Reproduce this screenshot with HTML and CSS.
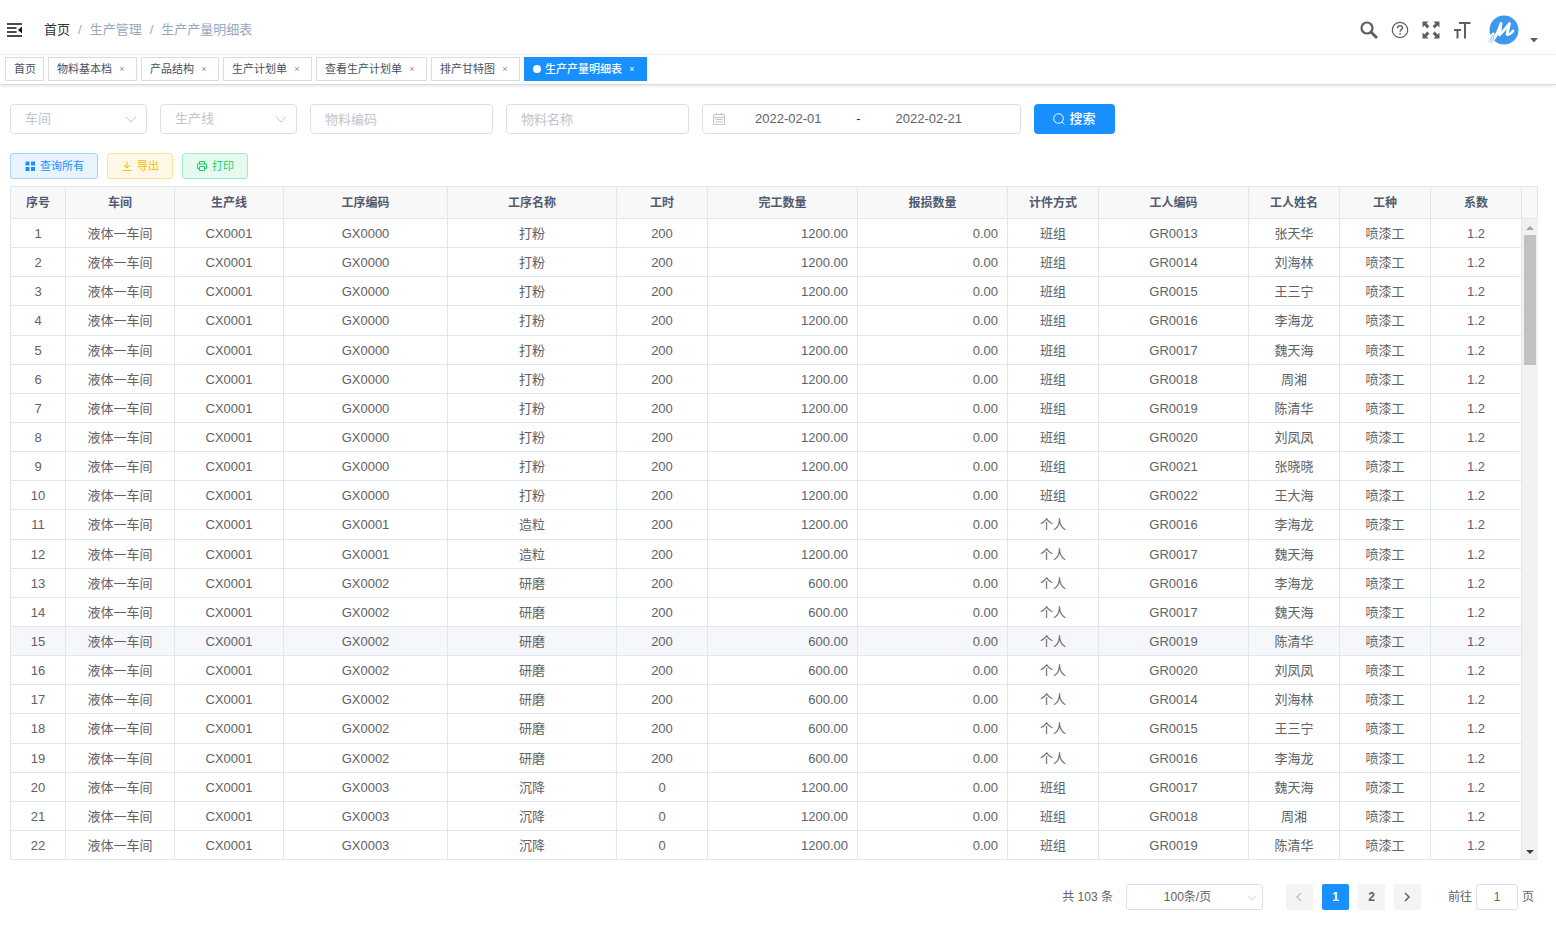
FILE: index.html
```
<!DOCTYPE html>
<html lang="zh-CN">
<head>
<meta charset="utf-8">
<title>生产产量明细表</title>
<link rel="stylesheet" href="styles.css">
</head>
<body>
<header class="navbar">
  <button class="icon-btn" type="button" aria-label="折叠菜单">
    <svg class="fold" viewBox="0 0 16 14"><path d="M0 1h15M0 5h9.500M0 9h9.500M0 13h15" stroke="#111" stroke-width="1.600"/><path d="M15 3.500v7L11 7z" fill="#111"/></svg>
  </button>
  <nav class="breadcrumb" aria-label="面包屑">
    <a href="#">首页</a><span>/</span><span>生产管理</span><span>/</span><span>生产产量明细表</span>
  </nav>
  <div class="tools">
    <button class="icon-btn" type="button" aria-label="搜索"><svg viewBox="0 0 18 18" fill="none" stroke="#5a5e66"><circle cx="7" cy="7" r="5.500" stroke-width="2.200"/><path d="M11 11l6 6" stroke-width="2.800"/></svg></button>
    <button class="icon-btn" type="button" aria-label="帮助"><svg viewBox="0 0 18 18" fill="none" stroke="#5a5e66"><circle cx="9" cy="9" r="7.700" stroke-width="1.200"/><path d="M6.600 7.200c0-3.400 4.900-3.200 4.900-.4 0 1.800-2.400 1.900-2.400 4" stroke-width="1.400"/><path d="M8.300 12.700h1.600" stroke-width="1.500"/></svg></button>
    <button class="icon-btn" type="button" aria-label="全屏"><svg viewBox="0 0 18 18"><g fill="#5a5e66"><path d="M.5.500h6L4.600 2.400l2.800 2.800-2.200 2.200-2.800-2.800L.5 6.500z"/><path d="M17.500.500v6l-1.900-1.900-2.800 2.800-2.200-2.200 2.800-2.800L11.500.500z"/><path d="M.5 17.500v-6l1.900 1.900 2.800-2.800 2.200 2.200-2.800 2.800 1.900 1.900z"/><path d="M17.500 17.500h-6l1.900-1.900-2.800-2.800 2.200-2.200 2.800 2.800 1.900-1.900z"/></g></svg></button>
    <button class="icon-btn" type="button" aria-label="字号"><svg viewBox="0 0 18 18" fill="none" stroke="#5a5e66"><path d="M6 2h11.500M12 2v15.500" stroke-width="2"/><path d="M1 9h7M4.500 9v8.500" stroke-width="2"/></svg></button>
    <button class="user" type="button" aria-label="用户菜单">
      <svg class="avatar" viewBox="0 0 32 32"><circle cx="17" cy="16" r="14.500" fill="#3f97ee"/><path d="M6 26C9 22 12 16 14 9.500L12.500 21C16 17.500 19.500 13.500 22.500 9.500L20 20.500c2 .5 4-1 6-3.500" fill="none" stroke="#fff" stroke-width="2.800" stroke-linejoin="round" stroke-linecap="round"/><path d="M1 24l6-5-4 7 5-3-4 7" fill="none" stroke="#fff" stroke-width="2"/><path d="M2 28l4-7M4 29l3-6" stroke="#8fc3f7" fill="none"/></svg>
      <svg class="caret" viewBox="0 0 8 5"><path d="M0 0h8L4 4.500z" fill="#5a5e66"/></svg>
    </button>
  </div>
</header>

<nav class="tabs" aria-label="已打开页面">
  <a class="tab" href="#">首页</a>
  <a class="tab" href="#">物料基本档<i class="close">×</i></a>
  <a class="tab" href="#">产品结构<i class="close">×</i></a>
  <a class="tab" href="#">生产计划单<i class="close">×</i></a>
  <a class="tab" href="#">查看生产计划单<i class="close">×</i></a>
  <a class="tab" href="#">排产甘特图<i class="close">×</i></a>
  <a class="tab active" href="#">生产产量明细表<i class="close">×</i></a>
</nav>

<main class="content">
  <form class="filters">
    <div class="select short">
      <select aria-label="车间"><option>车间</option></select>
      <svg viewBox="0 0 12 8"><path d="M1 1l5 5 5-5"/></svg>
    </div>
    <div class="select short">
      <select aria-label="生产线"><option>生产线</option></select>
      <svg viewBox="0 0 12 8"><path d="M1 1l5 5 5-5"/></svg>
    </div>
    <input class="field" type="text" placeholder="物料编码" aria-label="物料编码">
    <input class="field" type="text" placeholder="物料名称" aria-label="物料名称">
    <div class="range">
      <svg viewBox="0 0 12 12" fill="none" stroke="#c0c4cc"><path d="M.5 1.500h11v10H.5zM.5 4.500h11M3.500 0v2.500M8.500 0v2.500M2.500 6.500h7M2.500 9h7"/></svg>
      <input type="text" value="2022-02-01" aria-label="开始日期"><span>-</span><input type="text" value="2022-02-21" aria-label="结束日期">
    </div>
    <button class="search" type="button"><svg viewBox="0 0 12 12" fill="none" stroke="#fff"><circle cx="5.500" cy="5.500" r="4.800"/><path d="M9 9l2.500 2.500"/></svg>搜索</button>
  </form>

  <div class="actions">
    <button class="btn blue" type="button"><svg viewBox="0 0 10 10" fill="currentColor"><path d="M.5.500h4v4h-4zM6 .5h4v4H6zM.5 6h4v4h-4zM6 6h4v4H6z"/></svg>查询所有</button>
    <button class="btn amber" type="button"><svg viewBox="0 0 10 10" fill="none" stroke="currentColor"><path d="M5 .5v6.500M2 4l3 3 3-3M.5 9.500h9"/></svg>导出</button>
    <button class="btn green" type="button"><svg viewBox="0 0 10 10" fill="none" stroke="currentColor"><path d="M2.500 3V.5h5V3M2.500 7.500h-2V3h9v4.500h-2M2.500 5.500h5v4h-5z"/></svg>打印</button>
  </div>

  <div class="grid">
    <table>
      <colgroup>
        <col class="c55"><col class="c109"><col class="c109"><col class="c164"><col class="c169"><col class="c91"><col class="c150"><col class="c150"><col class="c91"><col class="c150"><col class="c91"><col class="c91"><col class="c91">
      </colgroup>
      <thead><tr><th>序号</th><th>车间</th><th>生产线</th><th>工序编码</th><th>工序名称</th><th>工时</th><th>完工数量</th><th>报损数量</th><th>计件方式</th><th>工人编码</th><th>工人姓名</th><th>工种</th><th>系数</th></tr></thead>
      <tbody id="rows"></tbody>
    </table>
    <div class="gutter">
      <div class="gutter-head"></div>
      <div class="track">
        <svg viewBox="0 0 8 4"><path d="M0 4h8L4 0z" fill="#a3a3a3"/></svg>
        <div class="thumb"></div>
        <svg viewBox="0 0 8 4"><path d="M0 0h8L4 4z" fill="#404040"/></svg>
      </div>
    </div>
  </div>

  <div class="pagination">
    <span class="total">共 103 条</span>
    <div class="select size">
      <select aria-label="每页条数"><option>100条/页</option></select>
      <svg viewBox="0 0 12 8"><path d="M1 1l5 5 5-5"/></svg>
    </div>
    <div class="pager">
      <button type="button" disabled aria-label="上一页"><svg viewBox="0 0 8 10"><path d="M6 1L2 5l4 4"/></svg></button>
      <button type="button" class="current">1</button>
      <button type="button">2</button>
      <button type="button" aria-label="下一页"><svg viewBox="0 0 8 10"><path d="M2 1l4 4-4 4"/></svg></button>
    </div>
    <label class="jump">前往<input type="text" value="1">页</label>
  </div>
</main>
<script src="app.js"></script>
</body>
</html>
```
FILE: styles.css
```
* { box-sizing: border-box; }

body {
  margin: 0;
  height: 100vh;
  display: flex;
  flex-direction: column;
  background: #fff;
  color: #606266;
  font: 13px/18px "Liberation Sans", "Noto Sans CJK SC", sans-serif;
}

button, input, select { font: inherit; color: inherit; }
button { border: 0; padding: 0; background: none; cursor: pointer; }
a { color: inherit; text-decoration: none; }
svg { display: block; flex: none; }

/* top bar */
.navbar {
  display: flex;
  align-items: center;
  height: 55px;
  padding: 6px 18px 0 7px;
  border-bottom: 1px solid #f0f3f4;
}
.fold { width: 16px; height: 14px; }
.breadcrumb { display: flex; align-items: baseline; gap: 8px; margin-left: 21px; color: #97a8be; }
.breadcrumb a { color: #303133; }
.tools { display: flex; align-items: center; gap: 13px; margin-left: auto; }
.tools .icon-btn svg { width: 18px; height: 18px; }
.user { display: flex; align-items: flex-end; gap: 11px; margin-left: 3px; }
.avatar { width: 32px; height: 32px; }
.caret { width: 8px; height: 5px; margin-bottom: 3px; }

/* page tabs */
.tabs {
  display: flex;
  align-items: center;
  gap: 4px;
  height: 30px;
  padding: 0 5px 1px;
  border-bottom: 1px solid #d8dce5;
  box-shadow: 0 1px 3px rgba(0, 0, 0, .12);
  font-size: 11px;
}
.tab {
  display: flex;
  align-items: center;
  height: 24px;
  padding: 0 7px 0 8px;
  border: 1px solid #d8dce5;
  color: #495060;
}
.close {
  width: 14px;
  margin-left: 3px;
  font-size: 9px;
  font-style: normal;
  text-align: center;
  color: #8a8f99;
}
.tab.active { background: #1890ff; border-color: #1890ff; color: #fff; font-weight: 500; }
.tab.active::before {
  content: "";
  width: 8px;
  height: 8px;
  margin-right: 4px;
  border-radius: 50%;
  background: #fff;
}
.tab.active .close { color: #fff; }

.content {
  flex: 1;
  min-height: 0;
  display: flex;
  flex-direction: column;
  padding: 19px 18px 25px 10px;
}

/* filters */
.filters { display: flex; gap: 13px; }
.select { position: relative; }
.select select {
  appearance: none;
  width: 100%;
  height: 100%;
  padding: 0 26px 0 14px;
  border: 1px solid #dcdfe6;
  border-radius: 4px;
  background: #fff;
}
.select svg {
  position: absolute;
  right: 10px;
  top: 50%;
  width: 12px;
  height: 8px;
  margin-top: -3px;
  fill: none;
  stroke: #c0c4cc;
  pointer-events: none;
}
.short { width: 137px; height: 30px; color: #c0c4cc; }
.field {
  width: 183px;
  height: 30px;
  padding: 0 14px;
  border: 1px solid #dcdfe6;
  border-radius: 4px;
}
.field::placeholder { color: #c0c4cc; }
.range {
  display: flex;
  align-items: center;
  width: 319px;
  height: 30px;
  padding: 0 28px 0 10px;
  border: 1px solid #dcdfe6;
  border-radius: 4px;
}
.range svg { width: 12px; height: 12px; }
.range input { flex: 1; min-width: 0; border: 0; padding: 0; text-align: center; background: none; }
.range span { width: 14px; text-align: center; color: #303133; }
.search {
  display: flex;
  align-items: center;
  justify-content: center;
  gap: 4px;
  width: 81px;
  height: 30px;
  border-radius: 4px;
  background: #1890ff;
  color: #fff;
  font-weight: 500;
}
.search svg { width: 12px; height: 12px; }

/* actions */
.actions { display: flex; gap: 9px; margin: 19px 0 7px; }
.btn {
  display: flex;
  align-items: center;
  gap: 5px;
  height: 26px;
  padding: 0 13px 0 14px;
  border: 1px solid;
  border-radius: 3px;
  font-size: 11px;
}
.btn svg { width: 10px; height: 10px; }
.blue { color: #1890ff; background: #e8f4ff; border-color: #a3d3ff; }
.amber { color: #ffba00; background: #fff8e6; border-color: #ffe399; }
.green { color: #13ce66; background: #e7faf0; border-color: #a1ebc2; }

/* data grid */
.grid {
  flex: 1;
  min-height: 0;
  display: flex;
  border: 1px solid #dfe6ec;
  border-right: 0;
}
.grid table {
  flex: 1;
  height: 100%;
  table-layout: fixed;
  border-collapse: separate;
  border-spacing: 0;
}
.c55 { width: 55px; }
.c91 { width: 91px; }
.c109 { width: 109px; }
.c150 { width: 150px; }
.c164 { width: 164px; }
.c169 { width: 169px; }
th, td {
  padding: 2px 9px 0;
  border-right: 1px solid #dfe6ec;
  border-bottom: 1px solid #dfe6ec;
  text-align: center;
  line-height: 20px;
}
th { height: 32px; padding-top: 0; background: #f8f8f9; color: #515a6e; font-size: 12px; font-weight: 700; }
tbody tr:last-child td { border-bottom: 0; }
td.num { text-align: right; }
tr.hover td { background: #f5f7fa; }
.gutter { width: 16px; display: flex; flex-direction: column; }
.gutter-head { height: 32px; background: #f8f8f9; border-right: 1px solid #dfe6ec; border-bottom: 1px solid #dfe6ec; }
.track { flex: 1; display: flex; flex-direction: column; align-items: center; padding: 7px 0 5px; background: #f1f1f1; }
.track svg { width: 8px; height: 4px; }
.thumb { width: 12px; height: 130px; margin: 5px 0 auto; background: #c1c1c1; }

/* pagination */
.pagination {
  display: flex;
  align-items: center;
  justify-content: flex-end;
  margin-top: 24px;
  padding-right: 4px;
  font-size: 12px;
}
.size { width: 137px; height: 26px; margin: 0 23px 0 13px; }
.size select { border-radius: 3px; text-align-last: center; padding: 0 14px 0 0; }
.size svg { right: 6px; width: 10px; }
.pager { display: flex; gap: 9px; }
.pager button {
  display: flex;
  align-items: center;
  justify-content: center;
  width: 27px;
  height: 26px;
  border-radius: 2px;
  background: #f4f4f5;
  font-weight: 700;
}
.pager svg { width: 8px; height: 10px; fill: none; stroke: #606266; stroke-width: 1.5; }
.pager button:disabled svg { stroke: #c0c4cc; }
.pager .current { background: #1890ff; color: #fff; }
.jump { display: flex; align-items: center; gap: 4px; margin-left: 27px; }
.jump input { width: 42px; height: 26px; padding: 0; border: 1px solid #dcdfe6; border-radius: 3px; text-align: center; }
```
FILE: app.js
```
const workers = {
  GR0013: "张天华", GR0014: "刘海林", GR0015: "王三宁", GR0016: "李海龙", GR0017: "魏天海",
  GR0018: "周湘", GR0019: "陈清华", GR0020: "刘凤凤", GR0021: "张晓晓", GR0022: "王大海"
};

const batches = [
  { code: "GX0000", name: "打粉", hours: 200, done: "1200.00", mode: "班组", ids: [13, 14, 15, 16, 17, 18, 19, 20, 21, 22] },
  { code: "GX0001", name: "造粒", hours: 200, done: "1200.00", mode: "个人", ids: [16, 17] },
  { code: "GX0002", name: "研磨", hours: 200, done: "600.00", mode: "个人", ids: [16, 17, 19, 20, 14, 15, 16] },
  { code: "GX0003", name: "沉降", hours: 0, done: "1200.00", mode: "班组", ids: [17, 18, 19] }
];

const body = document.getElementById("rows");
let index = 0;
for (const b of batches) {
  for (const id of b.ids) {
    index += 1;
    const worker = "GR00" + id;
    const values = [index, "液体一车间", "CX0001", b.code, b.name, b.hours, b.done, "0.00", b.mode, worker, workers[worker], "喷漆工", "1.2"];
    const row = body.insertRow();
    if (index === 15) row.className = "hover";
    values.forEach((value, i) => {
      const cell = row.insertCell();
      cell.textContent = value;
      if (i === 6 || i === 7) cell.className = "num";
    });
  }
}
```
